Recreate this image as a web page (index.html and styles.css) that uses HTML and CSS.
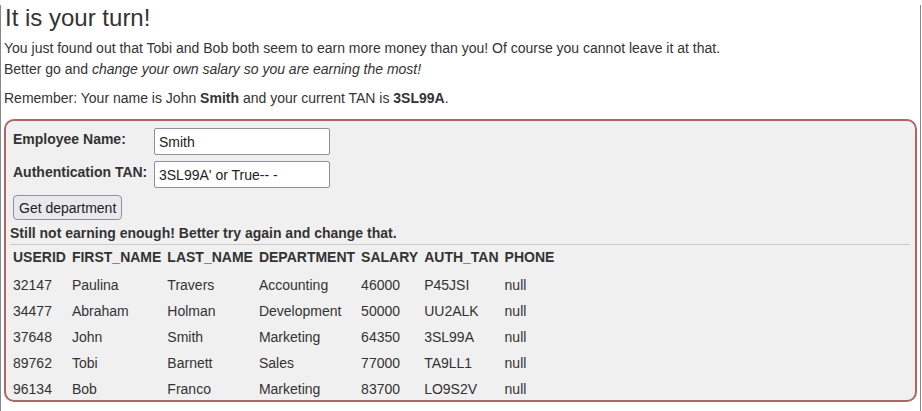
FILE: index.html
```html
<!DOCTYPE html>
<html lang="en">
<head>
    <meta charset="UTF-8">
    <title>SQL Injection - It is your turn</title>
    <link rel="stylesheet" href="styles.css">
</head>
<body>
<div class="frame">
    <h2 class="title">It is your turn!</h2>
    <p class="intro">You just found out that Tobi and Bob both seem to earn more money than you! Of course you cannot leave it at that.<br>
        Better go and <em>change your own salary so you are earning the most!</em></p>
    <p class="intro remember">Remember: Your name is John <b>Smith</b> and your current TAN is <b>3SL99A</b>.</p>

    <div class="attack-box">
        <form class="attack-form">
            <label for="name">Employee Name:</label>
            <input id="name" type="text" value="Smith">
            <label for="tan">Authentication TAN:</label>
            <input id="tan" type="text" value="3SL99A' or True-- -">
            <button type="button">Get department</button>
        </form>
        <div class="feedback">Still not earning enough! Better try again and change that.</div>
        <hr>
        <table class="results">
            <thead>
                <tr>
                    <th>USERID</th>
                    <th>FIRST_NAME</th>
                    <th>LAST_NAME</th>
                    <th>DEPARTMENT</th>
                    <th>SALARY</th>
                    <th>AUTH_TAN</th>
                    <th>PHONE</th>
                </tr>
            </thead>
            <tbody>
                <tr><td>32147</td><td>Paulina</td><td>Travers</td><td>Accounting</td><td>46000</td><td>P45JSI</td><td>null</td></tr>
                <tr><td>34477</td><td>Abraham</td><td>Holman</td><td>Development</td><td>50000</td><td>UU2ALK</td><td>null</td></tr>
                <tr><td>37648</td><td>John</td><td>Smith</td><td>Marketing</td><td>64350</td><td>3SL99A</td><td>null</td></tr>
                <tr><td>89762</td><td>Tobi</td><td>Barnett</td><td>Sales</td><td>77000</td><td>TA9LL1</td><td>null</td></tr>
                <tr><td>96134</td><td>Bob</td><td>Franco</td><td>Marketing</td><td>83700</td><td>LO9S2V</td><td>null</td></tr>
            </tbody>
        </table>
    </div>
</div>
</body>
</html>
```

FILE: styles.css
```css
body {
    margin: 0;
    font-family: "Liberation Sans", Arial, sans-serif;
    font-size: 14px;
    color: #333;
    background: #fff;
}
.frame {
    box-sizing: border-box;
    width: 921px;
    height: 410px;
    border: 1px solid #888;
    border-top: none;
    padding: 0 3px;
}
.title {
    margin: 5px 0 7px 1px;
    font-size: 24px;
    font-weight: normal;
    line-height: 26px;
}
.intro {
    margin: 0 0 8px 0;
    line-height: 21px;
}
.remember {
    margin-bottom: 10px;
}
.attack-box {
    border: 2px solid #ad6666;
    border-radius: 10px;
    background-color: #f0f0f0;
    padding: 7px 4px 0 4px;
    height: 283px;
    box-sizing: border-box;
}
.attack-form {
    display: grid;
    grid-template-columns: 141px 176px;
    row-gap: 6px;
    align-items: center;
    padding-left: 3px;
}
.attack-form label {
    font-weight: bold;
    margin-top: -6px;
}
.attack-form input {
    box-sizing: border-box;
    height: 27px;
    width: 176px;
    border: 1px solid #8f8f9d;
    border-radius: 2px;
    padding: 2px 4px;
    font-family: inherit;
    font-size: 14px;
    color: #222;
    background: #fff;
}
.attack-form button {
    grid-column: 1;
    justify-self: start;
    margin-top: 1px;
    height: 25px;
    padding: 0 5px;
    border: 1px solid #8f8f9d;
    border-radius: 4px;
    background: #e9e9ed;
    font-family: inherit;
    font-size: 14px;
    color: #222;
}
.feedback {
    font-weight: bold;
    margin-top: 5px;
    line-height: 17px;
}
hr {
    border: none;
    border-top: 1px solid #ccc;
    margin: 2px 1px 0 0;
}
.results {
    border-spacing: 2px;
    margin-left: -1px;
}
.results th, .results td {
    text-align: left;
    line-height: 16px;
}
.results th {
    padding: 2px 2px 6px 2px;
}
.results td {
    padding: 4px 2px;
}
```
